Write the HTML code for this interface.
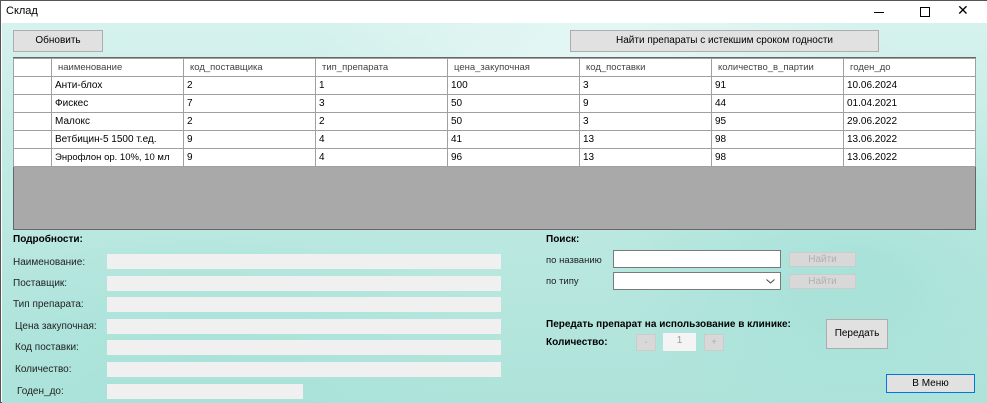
<!DOCTYPE html>
<html><head><meta charset="utf-8"><style>
*{margin:0;padding:0;box-sizing:border-box}
body{width:987px;height:403px;overflow:hidden;font-family:"Liberation Sans",sans-serif;font-size:10px;color:#000;position:relative;background:#fff}
.win{position:absolute;left:0;top:0;width:987px;height:403px;border:1px solid #555}
.title{position:absolute;left:0;top:0;width:987px;height:22px;background:#fff}
.main{position:absolute;left:1px;top:22px;width:985px;height:380px;background:
radial-gradient(ellipse 300px 120px at 600px 50px,rgba(255,255,255,.5),transparent),
radial-gradient(ellipse 250px 150px at 850px 250px,rgba(150,220,210,.5),transparent),
radial-gradient(ellipse 300px 150px at 200px 330px,rgba(160,225,215,.5),transparent),
linear-gradient(180deg,#d6f2ee 0%,#bfeae3 40%,#aee3da 100%)}
.a{position:absolute}
.btn{position:absolute;background:#e1e1e1;border:1px solid #adadad;text-align:center;font-size:10px}
.fld{position:absolute;background:#f0f0f0;height:15px}
table{border-collapse:collapse;position:absolute;left:12px;top:57px;table-layout:fixed}
td{border:1px solid #a0a0a0;height:18px;padding:0 0 0 3px;font-size:10px;background:#fff;white-space:nowrap;overflow:hidden}
tr.h td{color:#444;font-size:9.5px;padding-left:6px}
.b{font-weight:bold}
.dis{position:absolute;background:#d8d8d8;border:1px solid #ccc;color:#b0b0b0;text-align:center;font-size:10px}
.l{position:absolute;color:#222;font-size:10px}
</style></head><body>
<div class="win">
<div class="title">
<div class="a" style="left:5px;top:4px;font-size:11px">Склад</div>
<div class="a" style="left:873px;top:11px;width:10px;height:1px;background:#000"></div>
<div class="a" style="left:919px;top:6px;width:10px;height:10px;border:1px solid #000"></div>
<div class="a" style="left:956px;top:1px;font-size:14px">✕</div>
</div>
<div class="main"></div>
<div class="btn" style="left:12px;top:29px;width:90px;height:22px;line-height:20px">Обновить</div>
<div class="btn" style="left:569px;top:29px;width:309px;height:22px;line-height:20px">Найти препараты с истекшим сроком годности</div>
<div class="a" style="left:12px;top:56px;width:963px;height:173px;background:#a9a9a9;border:1px solid #666"></div>
<table>
<colgroup><col style="width:38px"><col style="width:132px"><col style="width:132px"><col style="width:132px"><col style="width:132px"><col style="width:132px"><col style="width:132px"><col style="width:132px"></colgroup>
<tr class="h"><td></td><td>наименование</td><td>код_поставщика</td><td>тип_препарата</td><td>цена_закупочная</td><td>код_поставки</td><td>количество_в_партии</td><td>годен_до</td></tr>
<tr><td></td><td>Анти-блох</td><td>2</td><td>1</td><td>100</td><td>3</td><td>91</td><td>10.06.2024</td></tr>
<tr><td></td><td>Фискес</td><td>7</td><td>3</td><td>50</td><td>9</td><td>44</td><td>01.04.2021</td></tr>
<tr><td></td><td>Малокс</td><td>2</td><td>2</td><td>50</td><td>3</td><td>95</td><td>29.06.2022</td></tr>
<tr><td></td><td>Ветбицин-5 1500 т.ед.</td><td>9</td><td>4</td><td>41</td><td>13</td><td>98</td><td>13.06.2022</td></tr>
<tr><td></td><td style="font-size:9.5px">Энрофлон ор. 10%, 10 мл</td><td>9</td><td>4</td><td>96</td><td>13</td><td>98</td><td>13.06.2022</td></tr>
</table>
<div class="a b" style="left:12px;top:233px">Подробности:</div>
<div class="l" style="left:12px;top:256px">Наименование:</div>
<div class="l" style="left:12px;top:277px">Поставщик:</div>
<div class="l" style="left:12px;top:298px">Тип препарата:</div>
<div class="l" style="left:14px;top:320px">Цена закупочная:</div>
<div class="l" style="left:14px;top:341px">Код поставки:</div>
<div class="l" style="left:14px;top:363px">Количество:</div>
<div class="l" style="left:16px;top:385px">Годен_до:</div>
<div class="fld" style="left:106px;top:253px;width:394px"></div>
<div class="fld" style="left:106px;top:275px;width:394px"></div>
<div class="fld" style="left:106px;top:296px;width:394px"></div>
<div class="fld" style="left:106px;top:318px;width:394px"></div>
<div class="fld" style="left:106px;top:339px;width:394px"></div>
<div class="fld" style="left:106px;top:361px;width:394px"></div>
<div class="fld" style="left:106px;top:383px;width:196px"></div>
<div class="a b" style="left:545px;top:233px">Поиск:</div>
<div class="l" style="left:545px;top:254px;font-size:9.5px">по названию</div>
<div class="l" style="left:545px;top:275px;font-size:9.5px">по типу</div>
<div class="a" style="left:612px;top:249px;width:168px;height:18px;background:#fff;border:1px solid #7a7a7a"></div>
<div class="a" style="left:612px;top:271px;width:168px;height:18px;background:#fff;border:1px solid #7a7a7a"><svg style="position:absolute;right:5px;top:6px" width="9" height="5"><path d="M0.5 0.5 L4.5 4 L8.5 0.5" fill="none" stroke="#444"/></svg></div>
<div class="dis" style="left:788px;top:251px;width:67px;height:15px;line-height:13px">Найти</div>
<div class="dis" style="left:788px;top:273px;width:67px;height:15px;line-height:13px">Найти</div>
<div class="a b" style="left:545px;top:318px">Передать препарат на использование в клинике:</div>
<div class="a b" style="left:545px;top:336px">Количество:</div>
<div class="dis" style="left:635px;top:333px;width:20px;height:17px;line-height:15px">-</div>
<div class="a" style="left:662px;top:332px;width:33px;height:18px;background:#f4f4f4;text-align:center;color:#999;line-height:15px">1</div>
<div class="dis" style="left:703px;top:333px;width:20px;height:17px;line-height:15px">+</div>
<div class="btn" style="left:825px;top:318px;width:62px;height:30px;line-height:28px">Передать</div>
<div class="btn" style="left:885px;top:373px;width:89px;height:19px;line-height:17px;border:1px solid #0078d7">В Меню</div>
</div>
</body></html>
